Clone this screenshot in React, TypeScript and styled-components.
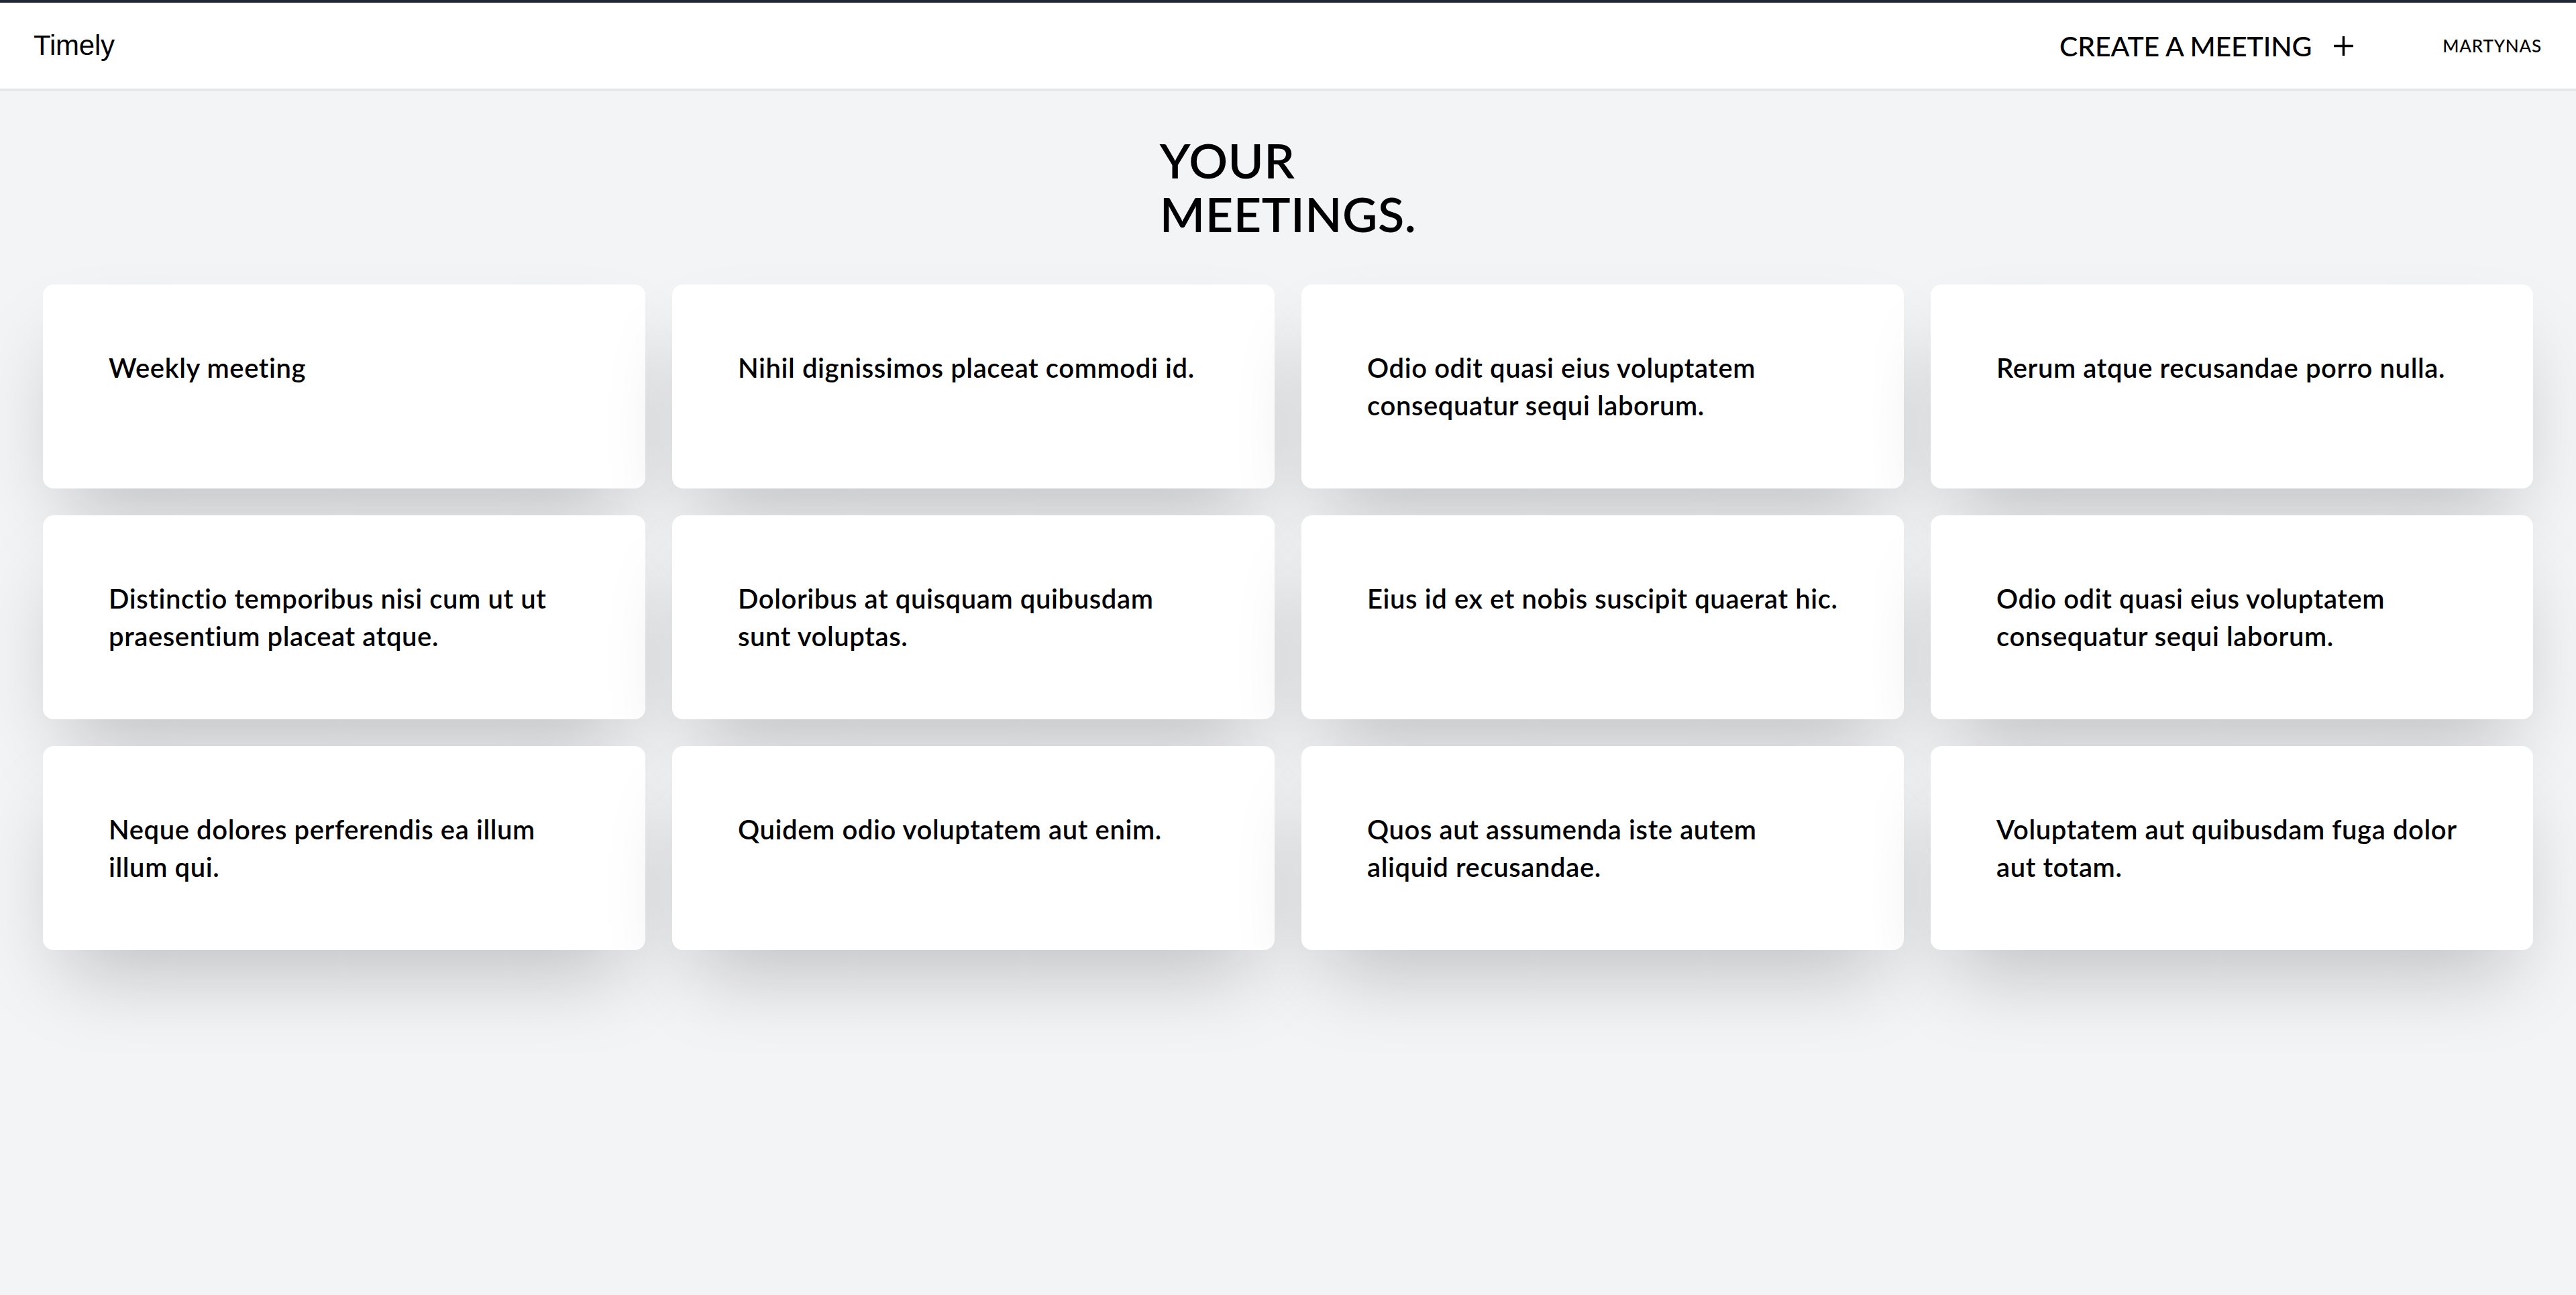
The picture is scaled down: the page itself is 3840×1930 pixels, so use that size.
import React from "react";
import styled, { createGlobalStyle } from "styled-components";

const GlobalStyle = createGlobalStyle`
  html, body {
    margin: 0;
    padding: 0;
    background: #f3f4f6;
    color: #000;
    font-family: Lato, "Noto Sans", sans-serif;
  }
  * { box-sizing: border-box; }
`;

const Page = styled.div`
  min-height: 1930px;
  background: #f3f4f6;
`;

const Header = styled.header`
  display: flex;
  align-items: center;
  justify-content: space-between;
  height: 136px;
  padding: 0 51px 0 50px;
  background: #ffffff;
  border-top: 4px solid #222833;
  border-bottom: 4px solid #e5e7eb;
`;

const Brand = styled.div`
  font-family: "Liberation Sans", Arial, sans-serif;
  font-size: 42px;
  font-weight: 400;
  color: #000;
  letter-spacing: -0.2px;
`;

const Nav = styled.nav`
  display: flex;
  align-items: center;
  gap: 133px;
`;

const CreateButton = styled.button`
  display: flex;
  align-items: center;
  gap: 33px;
  padding: 0;
  border: none;
  background: none;
  font-family: Lato, "Noto Sans", sans-serif;
  font-size: 41px;
  font-weight: 500;
  color: #000;
  letter-spacing: -0.15px;
  cursor: pointer;
`;

const PlusIcon = styled.svg`
  width: 29px;
  height: 29px;
  display: block;
`;

const UserName = styled.span`
  font-family: Lato, "Noto Sans", sans-serif;
  font-size: 26px;
  font-weight: 500;
  letter-spacing: 0.8px;
  color: #000;
`;

const Main = styled.main`
  padding: 62px 64px 64px;
`;

const Title = styled.h1`
  width: min-content;
  margin: 0 auto 66px;
  font-family: Lato, "Noto Sans", sans-serif;
  font-size: 72px;
  line-height: 80px;
  font-weight: 600;
  letter-spacing: 0.5px;
  color: #000;
`;

const Grid = styled.div`
  display: grid;
  grid-template-columns: repeat(4, 1fr);
  gap: 40px;
`;

const Card = styled.article`
  height: 304px;
  padding: 96px 96px 0 98px;
  background: #ffffff;
  border-radius: 16px;
  box-shadow: 0 62px 125px -30px rgba(0, 0, 0, 0.22);
`;

const CardTitle = styled.h2`
  margin: 0;
  font-family: Lato, "Noto Sans", sans-serif;
  font-size: 40px;
  line-height: 56px;
  font-weight: 600;
  letter-spacing: 0.6px;
  color: #000;
`;

const meetings = [
  "Weekly meeting",
  "Nihil dignissimos placeat commodi id.",
  "Odio odit quasi eius voluptatem consequatur sequi laborum.",
  "Rerum atque recusandae porro nulla.",
  "Distinctio temporibus nisi cum ut ut praesentium placeat atque.",
  "Doloribus at quisquam quibusdam sunt voluptas.",
  "Eius id ex et nobis suscipit quaerat hic.",
  "Odio odit quasi eius voluptatem consequatur sequi laborum.",
  "Neque dolores perferendis ea illum illum qui.",
  "Quidem odio voluptatem aut enim.",
  "Quos aut assumenda iste autem aliquid recusandae.",
  "Voluptatem aut quibusdam fuga dolor aut totam.",
];

export default function App() {
  return (
    <Page>
      <GlobalStyle />
      <Header>
        <Brand>Timely</Brand>
        <Nav>
          <CreateButton>
            CREATE A MEETING
            <PlusIcon viewBox="0 0 29 29" aria-hidden="true">
              <line x1="14.5" y1="0" x2="14.5" y2="29" stroke="#000" strokeWidth="3.5" strokeLinecap="round" />
              <line x1="0" y1="14.5" x2="29" y2="14.5" stroke="#000" strokeWidth="3.5" strokeLinecap="round" />
            </PlusIcon>
          </CreateButton>
          <UserName>MARTYNAS</UserName>
        </Nav>
      </Header>
      <Main>
        <Title>YOUR MEETINGS.</Title>
        <Grid>
          {meetings.map((m, i) => (
            <Card key={i}>
              <CardTitle>{m}</CardTitle>
            </Card>
          ))}
        </Grid>
      </Main>
    </Page>
  );
}
